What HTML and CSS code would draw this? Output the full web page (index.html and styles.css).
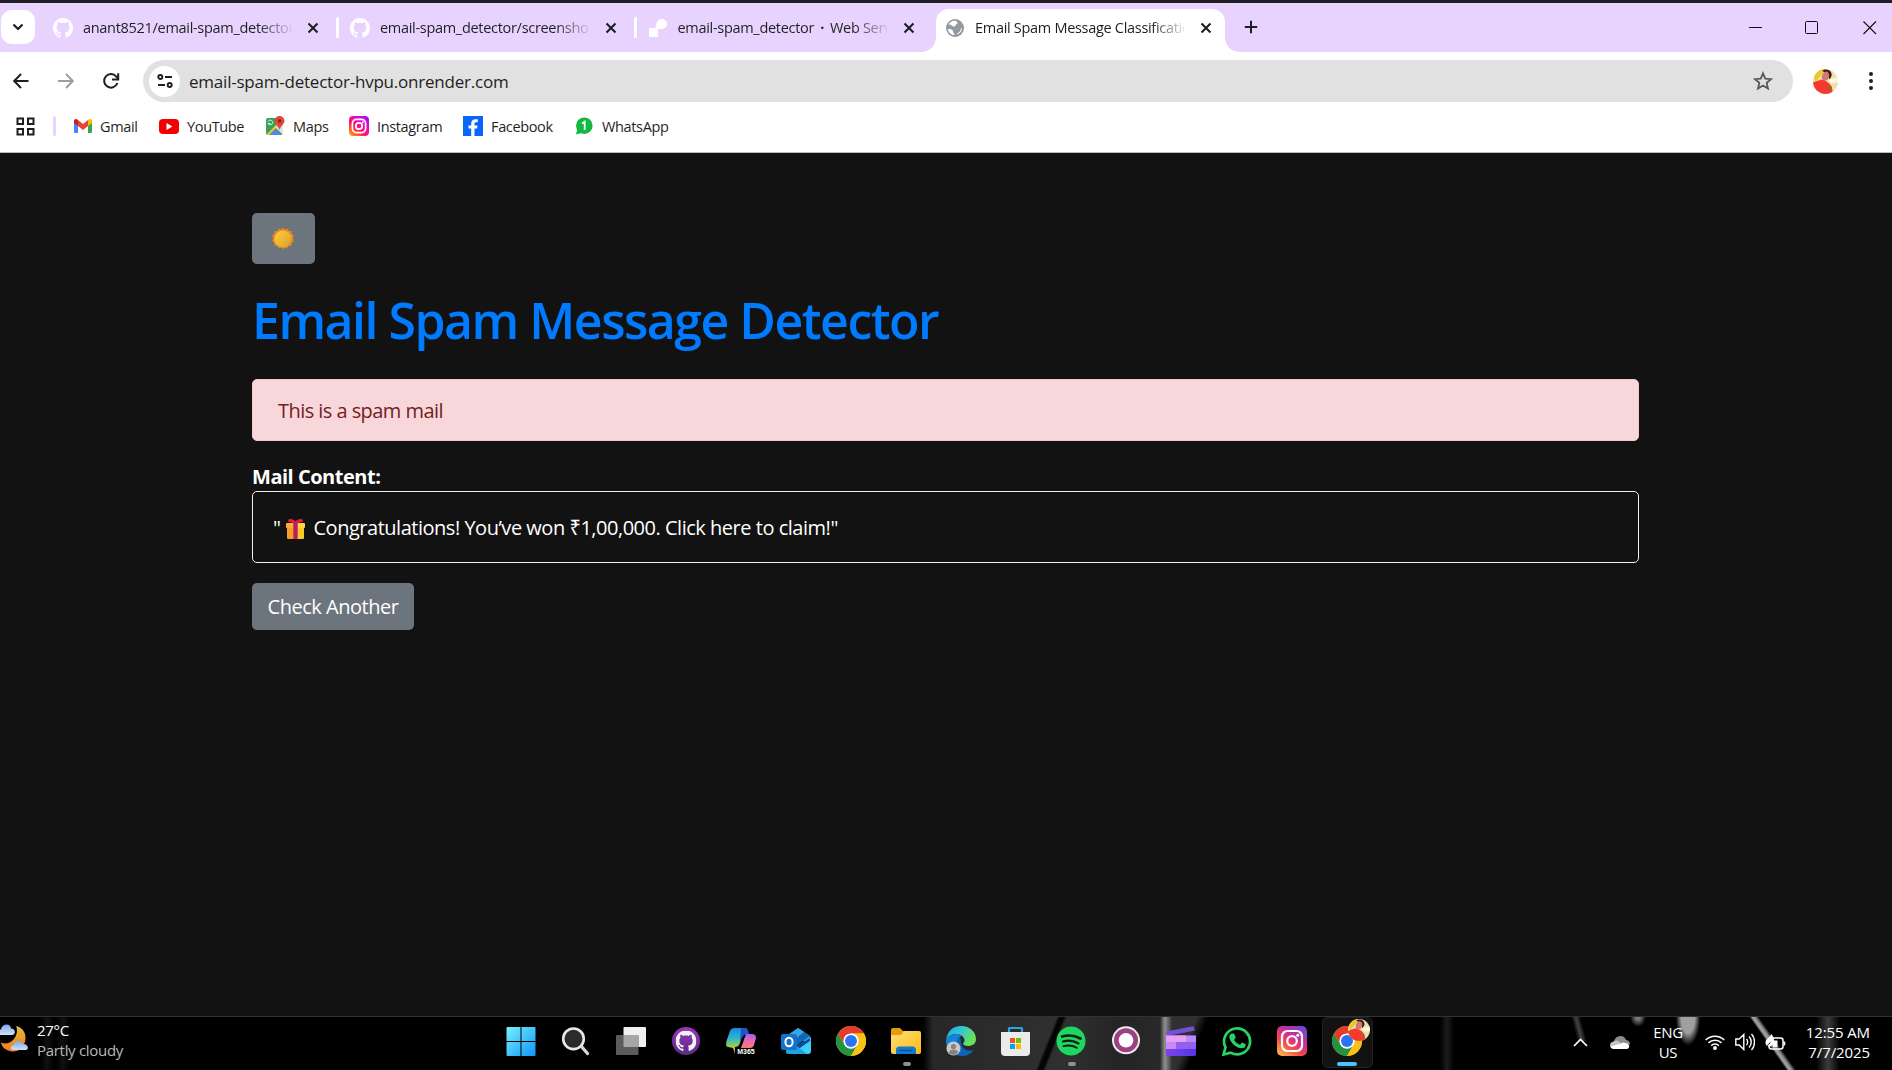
FILE: index.html
```html
<!DOCTYPE html>
<html lang="en">
<head>
<meta charset="utf-8">
<title>Email Spam Message Classification</title>
<link rel="stylesheet" href="styles.css">
</head>
<body>
<svg class="defs" width="0" height="0" aria-hidden="true">
  <defs>
    <linearGradient id="ig" x1="0.15" y1="1" x2="0.85" y2="0"><stop offset="0" stop-color="#fdb54b"/><stop offset=".35" stop-color="#f5484a"/><stop offset=".6" stop-color="#d22f8f"/><stop offset="1" stop-color="#6a45d9"/></linearGradient>
    <linearGradient id="ig2" x1="0" y1="1" x2=".9" y2="0"><stop offset="0" stop-color="#ffb400"/><stop offset=".4" stop-color="#ff1a5a"/><stop offset=".7" stop-color="#f300c8"/><stop offset="1" stop-color="#8a1cff"/></linearGradient>
    <linearGradient id="win" gradientUnits="userSpaceOnUse" x1="0" y1="0" x2="30" y2="30"><stop offset="0" stop-color="#7af3fb"/><stop offset="1" stop-color="#1093f8"/></linearGradient>
    <linearGradient id="gh" x1="0" y1="0" x2="0" y2="1"><stop offset="0" stop-color="#9a35b8"/><stop offset="1" stop-color="#5b2a86"/></linearGradient>
    <linearGradient id="edge" x1="0" y1="0" x2="1" y2=".4"><stop offset="0" stop-color="#1da5e8"/><stop offset=".5" stop-color="#34c6d2"/><stop offset="1" stop-color="#6be05a"/></linearGradient>
    <linearGradient id="cpa" x1="0" y1="0" x2="0" y2="1"><stop offset="0" stop-color="#1489e8"/><stop offset=".4" stop-color="#2fb8c8"/><stop offset=".7" stop-color="#9ccd4a"/><stop offset="1" stop-color="#ff7a2e"/></linearGradient>
    <linearGradient id="cpb" x1="0" y1="0" x2="0" y2="1"><stop offset="0" stop-color="#a25bf0"/><stop offset=".5" stop-color="#e86bb8"/><stop offset="1" stop-color="#ff7a62"/></linearGradient>
    <linearGradient id="moon" x1="0" y1="0" x2="0" y2="1"><stop offset="0" stop-color="#e0bd3c"/><stop offset="1" stop-color="#f47a16"/></linearGradient>
    <linearGradient id="cloud" x1="0" y1="0" x2="0" y2="1"><stop offset="0" stop-color="#7fa8ec"/><stop offset="1" stop-color="#cfe0fb"/></linearGradient>
    <linearGradient id="fold" x1="0" y1="0" x2="1" y2="1"><stop offset="0" stop-color="#ffe07a"/><stop offset="1" stop-color="#fdb813"/></linearGradient>
    <linearGradient id="clip" x1="0" y1="0" x2="1" y2="0"><stop offset="0" stop-color="#7b46e8"/><stop offset="1" stop-color="#5236e4"/></linearGradient>
    <linearGradient id="sun" x1="0" y1="0" x2="1" y2="1"><stop offset="0" stop-color="#ffd43b"/><stop offset="1" stop-color="#d99a2e"/></linearGradient>
    <clipPath id="disc"><circle cx="12" cy="12" r="12"/></clipPath>
    <symbol id="octocat" viewBox="0 0 16 16"><path d="M8 0C3.58 0 0 3.58 0 8c0 3.54 2.29 6.53 5.47 7.59.4.07.55-.17.55-.38 0-.19-.01-.82-.01-1.49-2.01.37-2.53-.49-2.69-.94-.09-.23-.48-.94-.82-1.13-.28-.15-.68-.52-.01-.53.63-.01 1.08.58 1.23.82.72 1.21 1.87.87 2.33.66.07-.52.28-.87.51-1.07-1.78-.2-3.64-.89-3.64-3.95 0-.87.31-1.59.82-2.15-.08-.2-.36-1.02.08-2.12 0 0 .67-.21 2.2.82.64-.18 1.32-.27 2-.27s1.36.09 2 .27c1.53-1.04 2.2-.82 2.2-.82.44 1.1.16 1.92.08 2.12.51.56.82 1.27.82 2.15 0 3.07-1.87 3.75-3.65 3.95.29.25.54.73.54 1.48 0 1.07-.01 1.93-.01 2.2 0 .21.15.46.55.38A8.01 8.01 0 0 0 16 8c0-4.42-3.58-8-8-8z"/></symbol>
    <symbol id="close" viewBox="0 0 12 12"><path d="M1.5 1.5l9 9M10.5 1.5l-9 9" stroke="#1f1f1f" stroke-width="2.1"/></symbol>
    <symbol id="chrome" viewBox="0 0 48 48"><circle cx="24" cy="24" r="24" fill="#fbc116"/><path d="M24 12h20.8A24 24 0 0 0 3.2 12l10.4 18z" fill="#e33b2e"/><path d="M3.2 12A24 24 0 0 0 24 48l10.4-18L24 24l-10.4 6z" fill="#229342"/><path d="M34.4 30L24 48A24 24 0 0 0 44.8 12H24z" fill="#fbc116"/><circle cx="24" cy="24" r="12.2" fill="#fff"/><circle cx="24" cy="24" r="9.6" fill="#2b73f0"/></symbol>
    <symbol id="avatar" viewBox="0 0 24 24"><g clip-path="url(#disc)"><path fill="#f2dfa8" d="M0 0h24v24H0z"/><path fill="#e9c832" d="M0 0h13L2 13z"/><path fill="#3a1a1c" d="M9 2c3-3 9-1 9 4l-2 4-3-6z"/><ellipse cx="12" cy="7" rx="3.400" ry="4.600" transform="rotate(20 12 7)" fill="#cf7a70"/><path fill="#f4392f" d="M0 13c4-2 6-2 8-3l5 2c4 2 6 6 6 12H0z"/><path fill="#fbf6e6" d="M15 10l9-2v5l-7 1z"/><path fill="#4d8a3a" d="M14 19l4-3-.5 4z"/></g></symbol>
  </defs>
</svg>

<header class="browser">
  <div class="tabstrip">
    <button class="tab-search"><svg width="12" height="8" viewBox="0 0 12 8"><path d="M1.500 1.500L6 6l4.500-4.500" fill="none" stroke="#1f1f1f" stroke-width="2.200"/></svg></button>
    <div class="tab t1"><svg class="fav" fill="#fff"><use href="#octocat"/></svg><span class="tab-title">anant8521/email-spam_detector</span><svg class="x"><use href="#close"/></svg><i class="sep"></i></div>
    <div class="tab"><svg class="fav" fill="#fff"><use href="#octocat"/></svg><span class="tab-title">email-spam_detector/screenshots</span><svg class="x"><use href="#close"/></svg><i class="sep"></i></div>
    <div class="tab"><svg class="fav" viewBox="0 0 20 20"><path fill="#fff" d="M1 10h5.500c1 0 1.500-.8 1.600-2C8.500 3.500 10.500 1 14 1a5 5 0 1 1 0 10h-4v8H1z"/></svg><span class="tab-title">email-spam_detector<b class="mid">·</b>Web Service</span><svg class="x"><use href="#close"/></svg></div>
    <div class="tab active"><svg class="fav" viewBox="0 0 20 20"><circle cx="10" cy="10" r="9" fill="#9298a0"/><path d="M3.500 6.500c3-.5 3.500 2 5.500 2s1-2 3-2.500c1-.3.500-2.500-1-3-3-.8-6 .8-7.500 3.500zM2.800 11c3 0 5.200.3 5.200 2.500 0 1.500 1.500 1 1.500 3.500-3.500 0-6.200-2.500-6.700-6zM12 16.500c.3-2 3-2 3.500-4.500.3-1.500 1-2 1.500-2 0 3-2 5.700-5 6.500z" fill="#fff"/></svg><span class="tab-title">Email Spam Message Classification</span><svg class="x"><use href="#close"/></svg></div>
    <svg class="plus" width="14" height="14" viewBox="0 0 14 14"><path d="M7 .8v12.400M.8 7h12.400" stroke="#1f1f1f" stroke-width="2"/></svg>
    <div class="winctl">
      <svg width="14" height="14" viewBox="0 0 14 14"><path d="M0 6.500h13" stroke="#111"/></svg>
      <svg width="14" height="14" viewBox="0 0 14 14"><rect x=".5" y=".5" width="12" height="12" rx="1" fill="none" stroke="#111"/></svg>
      <svg width="14" height="14" viewBox="0 0 14 14"><path d="M.5.5l12.500 12.500M13 .5L.5 13" stroke="#111" stroke-width="1.100"/></svg>
    </div>
  </div>

  <div class="toolbar">
    <svg class="nav" width="18" height="18" viewBox="0 0 18 18"><path d="M16.500 9h-14M9 2L2.200 9 9 16" fill="none" stroke="#1f1f1f" stroke-width="2"/></svg>
    <svg class="nav" width="18" height="18" viewBox="0 0 18 18"><path d="M1 9h14.500M9 2l6.800 7L9 16" fill="none" stroke="#9d9d9d" stroke-width="2"/></svg>
    <svg class="nav" width="18" height="18" viewBox="0 0 18 18"><path d="M15.400 11A6.800 6.800 0 1 1 14.300 4.600L16 6.600" fill="none" stroke="#1f1f1f" stroke-width="2"/><path d="M16.200 1.200v6.300H10" fill="none" stroke="#1f1f1f" stroke-width="2"/></svg>
    <div class="omnibox">
      <span class="site"><svg width="16" height="16" viewBox="0 0 16 16" fill="none" stroke="#1f1f1f" stroke-width="1.900"><circle cx="3.300" cy="4" r="2"/><path d="M8 4h7M1 12h7"/><circle cx="12.700" cy="12" r="2"/></svg></span>
      <span class="url">email-spam-detector-hvpu.onrender.com</span>
      <svg class="star" width="20" height="20" viewBox="0 0 24 24"><path d="M12 2.800l2.700 6.400 6.900.6-5.200 4.500 1.600 6.800-6-3.600-6 3.600 1.600-6.800L2.400 9.800l6.900-.6z" fill="none" stroke="#5a5a5a" stroke-width="2.200"/></svg>
    </div>
    <svg class="profile"><use href="#avatar"/></svg>
    <svg class="dots" width="6" height="20" viewBox="0 0 6 20" fill="#1f1f1f"><circle cx="3" cy="3" r="2"/><circle cx="3" cy="10" r="2"/><circle cx="3" cy="17" r="2"/></svg>
  </div>

  <nav class="bookmarks">
    <svg class="apps" width="19" height="19" viewBox="0 0 19 19" fill="none" stroke="#1f1f1f" stroke-width="2"><path d="M1.500 1.500h5.500v5.500h-5.500zM12 1.500h5.500v5.500H12zM1.500 12h5.500v5.500h-5.500zM12 12h5.500v5.500H12z"/></svg>
    <i class="bsep"></i>
    <a class="bm b1"><svg width="18" height="14" viewBox="0 0 18 14"><path fill="#4285f4" d="M0 2v10.700C0 13.500.6 14 1.300 14H4V5z"/><path fill="#34a853" d="M18 2v10.700c0 .8-.6 1.300-1.300 1.300H14V5z"/><path fill="#ea4335" d="M4 1l5 4 5-4v6l-5 4-5-4z"/><path fill="#c5221f" d="M0 2C0 0 2.200-.7 4 1v6L0 4z"/><path fill="#fbbc04" d="M18 2c0-2-2.200-2.700-4-1v6l4-3z"/></svg><span>Gmail</span></a>
    <a class="bm b2"><svg width="20" height="15" viewBox="0 0 20 15"><rect width="20" height="15" rx="4" fill="#f00000"/><path d="M7.500 4v7l6-3.500z" fill="#fff"/></svg><span>YouTube</span></a>
    <a class="bm b3"><svg width="19" height="20" viewBox="0 0 19 20"><rect y="2" width="17" height="17" rx="2" fill="#34a35a"/><path d="M3 19l6-6 6 6z" fill="#4a8af4"/><path d="M0 19L16 3l1.200 2L3 19z" fill="#fbc42d"/><path d="M9 11l8 8V9z" fill="#dfe3ea"/><path d="M2 5.500a2.400 2.400 0 1 1 0 2h2.500" fill="none" stroke="#e6f4e9"/><path d="M13.500 0a5 5 0 0 1 5 5c0 3-3.500 4-5 9-1.500-5-5-6-5-9a5 5 0 0 1 5-5z" fill="#e2453b"/><circle cx="13.500" cy="5" r="1.700" fill="#7c231d"/></svg><span>Maps</span></a>
    <a class="bm b4"><svg width="20" height="20" viewBox="0 0 20 20"><rect width="20" height="20" rx="4" fill="url(#ig2)"/><g fill="none" stroke="#fff" stroke-width="1.700"><rect x="3.400" y="3.400" width="13.200" height="13.200" rx="4"/><circle cx="10" cy="10" r="3.200"/></g><circle cx="13.800" cy="6.200" r="1" fill="#fff"/></svg><span>Instagram</span></a>
    <a class="bm b5"><svg width="20" height="20" viewBox="0 0 20 20"><path fill="#0866ff" d="M0 0h20v20H0z"/><path fill="#fff" d="M8.200 20v-7.500H5.500v-3h2.700V7.800c0-3 1.500-4.600 4.300-4.600h2.200v3h-1.500c-1.300 0-1.700.6-1.700 1.700v1.600h3l-.5 3h-2.500V20z"/></svg><span>Facebook</span></a>
    <a class="bm b6"><svg width="18" height="18" viewBox="0 0 18 18"><circle cx="9.300" cy="8.700" r="8.300" fill="#12b83f"/><path d="M1 17.500l1.500-6 4 4.500z" fill="#12b83f"/><path d="M7 6.500l2.700-1.800V13" fill="none" stroke="#fff" stroke-width="1.800"/></svg><span>WhatsApp</span></a>
  </nav>
</header>

<main class="page">
  <button class="btn theme"><svg width="24" height="24" viewBox="0 0 24 24"><path d="M12 .7l2 1.900 2.500-1.100 1.300 2.400 2.800.2.100 2.900 2.200 1.700-1.100 2.700 1.100 2.700-2.300 1.700-.2 2.800-2.800.3-1.400 2.400-2.500-1.100-1.700 2-1.800-2-2.500 1.100L6.300 19l-2.700-.4-.3-2.800-2.200-1.700 1.100-2.700-1.100-2.700 2.300-1.600.2-2.900 2.700-.3 1.400-2.400 2.500 1.100z" fill="#f08424"/><circle cx="12" cy="12" r="8.600" fill="url(#sun)"/></svg></button>
  <h1>Email Spam Message Detector</h1>
  <div class="alert"><span>This is a spam mail</span></div>
  <strong class="label">Mail Content:</strong>
  <div class="mail"><span>"</span><svg width="19" height="21" viewBox="0 0 19 21"><path d="M9.500 3.500C8 .5 2 0 2 2.500 2 4 4 5 9.500 5S17 4 17 2.500C17 0 11 .5 9.500 3.500z" fill="#d9203e"/><path d="M1 9h8.500v12H2.500Q1 21 1 20z" fill="#f3a126"/><path d="M9.500 9H18v11q0 1-1.500 1h-7z" fill="#fcc92a"/><rect x="0" y="5" width="9.500" height="5" rx="1" fill="#f8ad36"/><rect x="9.500" y="5" width="9.500" height="5" rx="1" fill="#ffd53b"/><path d="M7.300 4.500h4.400V21H7.300z" fill="#bd1d5e"/></svg><span class="msg">Congratulations! You’ve won ₹1,00,000. Click here to claim!"</span></div>
  <a class="btn again"><span>Check Another</span></a>
</main>

<footer class="taskbar">
  <div class="weather">
    <svg width="28" height="28" viewBox="0 0 28 28"><path d="M16 2c5 1 9.500 5 9.500 12S20 27.500 13 27.500C7 27.500 2 24 1 18.500c4 2 9 1 12.500-3S18 6 16 2z" fill="url(#moon)"/><path d="M-3 11c-2-5 3-6 4-5.500C2-1 11-1 11 4.500c5 0 5 6.500 1 6.500z" fill="url(#cloud)"/><path d="M13 26c-3.500 0-3-5 1-5 0-5 8-5 8.500-1 6-.5 7 6 3 6z" fill="url(#cloud)"/></svg>
    <div class="wtext"><span>27°C</span><span class="dim">Partly cloudy</span></div>
  </div>
  <div class="dock">
    <span class="app"><svg viewBox="0 0 30 30"><g fill="url(#win)"><path d="M.5 2a1 1 0 0 1 1-1H14.500v14H.5zM15.500 1H28.500a1 1 0 0 1 1 1v13h-14zM.5 16h14v14H1.500a1 1 0 0 1-1-1zM15.500 16h14v13a1 1 0 0 1-1 1h-13z"/></g></svg></span>
    <span class="app"><svg viewBox="0 0 30 30"><path d="M20 20l6.500 7.500" stroke="#d3d6da" stroke-width="3.400" stroke-linecap="round"/><circle cx="12.500" cy="12.800" r="10.300" fill="#2b2b2d" stroke="#e7e8ea" stroke-width="2.600"/></svg></span>
    <span class="app"><svg viewBox="0 0 30 30"><rect x="7.500" y="1" width="22.500" height="20" rx="1" fill="#f0f0f0"/><rect x="0" y="9" width="22.500" height="20" rx="1" fill="#5b5b5b"/><path d="M7.500 9h15v12h-15z" fill="#a6a6a6"/></svg></span>
    <span class="app"><svg viewBox="0 0 30 30"><circle cx="15" cy="15" r="14" fill="url(#gh)"/><svg x="4.500" y="4.500" width="21" height="21" fill="#f2f2f6"><use href="#octocat"/></svg></svg></span>
    <span class="app"><svg viewBox="0 0 30 30"><path d="M9 2h12L18 4l-4 13c-1 3-3 4-5 4v7l-2-6-5-1C0 21 0 18 .5 15L4 5q1-3 5-3z" fill="url(#cpa)"/><path d="M15 2h4c2 0 3 1 4 6l-5 1-4 6z" fill="#2153c9"/><path d="M20 8h6q4 0 4 4l-2 7q-1 3-4 3h-9z" fill="url(#cpb)"/><text x="11.200" y="28.300" class="m365">M365</text></svg></span>
    <span class="app"><svg viewBox="0 0 30 30"><path d="M5 10L17 2l12 8v5H5z" fill="#2ba0e0"/><path d="M17 2l12 8-14 10-6-8z" fill="#1267b8"/><path d="M9 9l8-7 6 4-11 9z" fill="#35a9e6"/><path d="M30 11v14q0 3-3 3H8q-3 0-3-3l11-5z" fill="#3fd0f5"/><path d="M16 20l13-8v3l-13 9z" fill="#0d4a9a"/><path d="M5 23l11-3 10 8H8q-3 0-3-3z" fill="#1ca0e6"/><rect x="0" y="8" width="16" height="16" rx="2" fill="#1473c8"/><ellipse cx="8" cy="16" rx="3.600" ry="4.300" fill="none" stroke="#fff" stroke-width="2"/></svg></span>
    <span class="app"><svg><use href="#chrome"/></svg></span>
    <span class="app"><svg viewBox="0 0 30 30"><path d="M0 4q0-2 2-2h7l3 3h16v8H0z" fill="#e39d0b"/><path d="M0 9h10l3-4h15q2 0 2 2v19q0 2-2 2H2q-2 0-2-2z" fill="url(#fold)"/><path d="M5 28v-4q0-3.500 3.500-3.500h13q3.500 0 3.500 3.500v4z" fill="#1379cc"/><path d="M8.500 24.500h13" stroke="#0a4e94" stroke-width="1.200"/></svg><i class="run"></i></span>
    <span class="app"><svg viewBox="0 0 30 30"><path d="M2 12C2 24 8 30 16 30c5 0 9-2 11.500-6-6 2-12-1-12.500-8 0-4-2-6-6-7z" fill="#0f62b4"/><path d="M0 15C1 5 7 0 15 0c9 0 15 6 15 13 0 5-4 7-8 7-3 0-5-1-5-2.500 0-1 1.500-1 1.500-3C18.500 11 15 8 10.500 8 5 8 1 11 0 15z" fill="url(#edge)"/><path d="M0 15c1-4 5-7 10.500-7 2 0 4 .6 5.500 1.700-3 .8-5 3.300-5 6.300 0 4 2 7 5 9L9 28C3 26 0 20 0 15z" fill="#1282d4"/><circle cx="7.500" cy="22.500" r="7" fill="#cbc9c8"/><circle cx="7.500" cy="20.500" r="2.600" fill="#858280"/><path d="M3 27q0-3.500 4.500-3.500T12 27q-4.500 4-9 0z" fill="#858280"/></svg></span>
    <span class="app"><svg viewBox="0 0 30 30"><path d="M8 8V2.500Q8 2 8.500 2h12q.5 0 .5.500V8" fill="none" stroke="#28a8e0" stroke-width="2.200"/><path d="M0 6h29v20q0 4-4 4H4q-4 0-4-4z" fill="#ebebeb"/><path fill="#f25022" d="M9 12h5v5H9z"/><path fill="#7fba00" d="M15 12h5v5h-5z"/><path fill="#00a4ef" d="M9 18h5v5H9z"/><path fill="#ffb900" d="M15 18h5v5h-5z"/></svg></span>
    <span class="app"><svg viewBox="0 0 30 30"><circle cx="15" cy="15" r="14.500" fill="#1ed760"/><g fill="none" stroke="#0c1f12" stroke-linecap="round"><path d="M6 10.500c6-1.700 13-1 18.500 2" stroke-width="2.700"/><path d="M7 15.500c5-1.500 11-.8 15.500 1.900" stroke-width="2.300"/><path d="M7.500 20.200c4.500-1.200 9.500-.6 13.300 1.600" stroke-width="1.900"/></g></svg><i class="run"></i></span>
    <span class="app"><svg viewBox="0 0 30 30"><circle cx="15" cy="14.300" r="14" fill="#ececec"/><circle cx="15" cy="14.300" r="12" fill="#9c4084"/><circle cx="15" cy="14.300" r="7.300" fill="#fff"/></svg></span>
    <span class="app"><svg viewBox="0 0 30 30"><path d="M0 5.500L26 .4q2-.4 2.400 1.500l.4 2.600L1 10z" fill="#7450d8"/><rect y="9.500" width="30" height="20.500" rx="1.500" fill="url(#clip)"/><path d="M0 9.500h30V16H0z" fill="#b98af5"/><path d="M0 9.500h20V16H0z" fill="#e5a0f6"/><path d="M0 16h30v7H0z" fill="#925ff0"/><path d="M0 16h10v7H0z" fill="#c98af5"/></svg></span>
    <span class="app"><svg viewBox="0 0 30 30"><path d="M1.500 28.500l2-7.200A13 13 0 1 1 8.500 26.600z" fill="none" stroke="#25d366" stroke-width="2.700"/><path d="M10 7.500h1.500q.6 0 .9.700l1.200 2.800q.2.600-.2 1.100l-1 1.300q-.3.400 0 .8c1.200 2 2.800 3.500 5 4.400q.5.200.9-.2l1.200-1.500q.4-.5 1-.2l2.700 1.300q.7.300.6 1c-.2 2-1.800 3.300-3.800 3.300C14 22.500 7.800 16 7.300 11.200c-.1-1.700 1.200-3.700 2.700-3.700z" fill="#25d366"/></svg></span>
    <span class="app"><svg viewBox="0 0 30 30"><rect width="30" height="30" rx="5" fill="url(#ig)"/><g fill="none" stroke="#fff" stroke-width="2.200"><rect x="5" y="5" width="20" height="20" rx="5.500"/><circle cx="15" cy="15" r="4.800"/></g><circle cx="20.800" cy="9.200" r="1.500" fill="#fff"/></svg></span>
    <span class="app current"><svg><use href="#chrome"/></svg><svg class="badge"><use href="#avatar"/></svg><i class="run wide"></i></span>
  </div>
  <div class="tray">
    <svg width="15" height="9" viewBox="0 0 15 9"><path d="M1 8l6.500-6.500L14 8" fill="none" stroke="#fff" stroke-width="1.700"/></svg>
    <svg class="onedrive" width="20" height="13" viewBox="0 0 20 13"><path d="M4 9C3 4 6 0 10.500 0c3 0 5 2 5.500 4 3 .3 4 2.500 4 4.500z" fill="#8d8d8d"/><path d="M4 13C-1 13-1.500 6 3.500 5.500 7 3 10 5.500 11 8l-3 5z" fill="#c4c4c4"/><path d="M4 13c-1.500 0-3-1-3.500-2.500L11 7.500q2-1.500 4-.5c4-.5 6.500 5.500 1.500 6z" fill="#fff"/></svg>
    <div class="lang"><span>ENG</span><span>US</span></div>
    <svg class="wifi" width="20" height="16" viewBox="0 0 20 16" fill="none" stroke="#fff" stroke-width="1.500"><path d="M.7 6a13.200 13.200 0 0 1 18.600 0M3.500 8.900a9.200 9.200 0 0 1 13 0M6.200 11.600a5.400 5.400 0 0 1 7.600 0"/><circle cx="10" cy="14" r="1.200" fill="#fff"/></svg>
    <svg class="vol" width="20" height="18" viewBox="0 0 20 18" fill="none" stroke="#fff" stroke-width="1.400"><path d="M.8 6h3.400l4.600-4.500v15L4.200 12H.8zM11.500 6c1.500 1.500 1.500 4.500 0 6M14 3.500c3 3 3 8 0 11M16.500 1c4 4 4 12 0 16"/></svg>
    <svg class="bat" width="21" height="17" viewBox="0 0 21 17"><rect x="4" y="4" width="14" height="11" rx="2.500" fill="none" stroke="#fff" stroke-width="1.500"/><path d="M18.500 7.500h1q.8 0 .8 1v2q0 1-.8 1h-1z" fill="#fff"/><path d="M8 6.500h4.500V13H8z" fill="#fff"/><path d="M6.500 0C8 2.500 9 4 9 7c0 3-2 5.500-4.500 5.500C2 12.500.5 11 .5 8.500.5 5 4 4.500 6.500 0z" fill="#fff"/><path d="M0 15.500c1-3 3-5 5.500-7" stroke="#111" fill="none"/></svg>
    <div class="clock"><span>12:55 AM</span><span>7/7/2025</span></div>
  </div>
</footer>
</body>
</html>
```
FILE: styles.css
```css
* { box-sizing: border-box; }
body {
  margin: 0;
  width: 1892px;
  height: 1070px;
  overflow: hidden;
  display: flex;
  flex-direction: column;
  background: #121212;
  font-family: "Open Sans", "Noto Sans", sans-serif;
  color: #fff;
}
svg { display: block; flex: none; }
span { white-space: nowrap; }
button { font: inherit; border: 0; padding: 0; }
.defs { position: absolute; }

/* Browser chrome */
.browser { background: #fff; border-top: 3px solid #211f23; border-bottom: 1px solid #bdbdbd; height: 153px; color: #1f1f1f; flex: none; }
.tabstrip { height: 49px; background: #e8d3ff; display: flex; align-items: flex-start; }
.tab-search { width: 34px; height: 34px; margin: 7px 0 0 1px; border-radius: 11px; background: #fff; display: flex; align-items: center; justify-content: center; }
.tab { width: 297.500px; height: 49px; display: flex; align-items: center; padding-left: 11px; flex: none; }
.tab.t1 { width: 297px; margin-left: 7px; }
.fav { width: 20px; height: 20px; margin-right: 10px; }
.tab-title { width: 209px; font-size: 14.500px; letter-spacing: -.3px; overflow: hidden; mask-image: linear-gradient(90deg, #000 84%, rgba(0,0,0,.1)); }
.mid { margin: 0 6px; }
.x { width: 12px; height: 12px; margin-left: 16px; }
.sep { width: 3px; height: 21px; border-radius: 2px; background: #fff; margin-left: 17px; }
.tab.active { position: relative; width: 289px; height: 43px; margin: 6px 0 0 2px; padding: 0 0 6px 9px; background: #fff; border-radius: 13px 13px 0 0; }
.tab.active::before, .tab.active::after { content: ""; position: absolute; bottom: 0; width: 14px; height: 14px; }
.tab.active::before { left: -14px; background: radial-gradient(circle at 0 0, transparent 13.500px, #fff 14px); }
.tab.active::after { right: -14px; background: radial-gradient(circle at 100% 0, transparent 13.500px, #fff 14px); }
.plus { margin: 17px 0 0 19px; }
.winctl { margin: 18px 15px 0 auto; display: flex; gap: 43px; }
.winctl svg:nth-child(2) { margin-left: -1px; margin-right: 1px; }
.toolbar { height: 58px; display: flex; align-items: center; padding-left: 12px; gap: 27px; }
.omnibox { width: 1650px; height: 42px; margin-left: -4px; border-radius: 21px; background: #e1e1e1; display: flex; align-items: center; padding: 0 20px 0 6px; }
.site { width: 31px; height: 31px; border-radius: 50%; background: #fff; display: grid; place-items: center; }
.url { font-size: 17px; letter-spacing: -.22px; margin-left: 9px; }
.star { margin-left: auto; }
.profile { width: 25px; height: 25px; margin-left: -7px; }
.dots { margin-left: 3px; }
.bookmarks { height: 32px; display: flex; align-items: center; font-size: 14.500px; letter-spacing: -.35px; padding-left: 16px; }
.bsep { width: 3px; height: 20px; border-radius: 2px; background: #e8d3ff; margin: 0 18px 0 18px; }
.bm { display: flex; align-items: center; gap: 8px; flex: none; }
.b1 { width: 85px; }
.b2 { width: 107px; }
.b3 { width: 83px; }
.b4 { width: 114px; }
.b5 { width: 112px; }
.b6 { gap: 9px; }

/* Page */
.page { flex: 1; padding: 60px 0 0 252px; display: flex; flex-direction: column; align-items: flex-start; font-size: 20px; line-height: 30px; letter-spacing: -.48px; }
.btn { background: #6c757d; border-radius: 5px; display: flex; align-items: center; justify-content: center; color: #fff; }
.theme { width: 63px; height: 51px; padding-right: 1px; }
h1 { margin: 26px 0 0; font-size: 50px; line-height: 60px; height: 60px; font-weight: 550; letter-spacing: -1.500px; color: #007bff; white-space: nowrap; }
.alert { width: 1387px; height: 62px; margin-top: 29px; padding: 2px 25px 0; border: 1px solid #f5c6cb; border-radius: 5px; background: #f8d7da; color: #721c24; display: flex; align-items: center; letter-spacing: -.55px; }
.label { margin-top: 21px; height: 29px; white-space: nowrap; }
.mail { width: 1387px; height: 72px; border: 1px solid #f1f1f1; border-radius: 5px; padding: 2px 20px 0; display: flex; align-items: center; }
.mail svg { margin: 0 9px 0 5px; }
.again { width: 162px; height: 47px; margin-top: 20px; padding-top: 1px; }

/* Taskbar */
.taskbar {
  height: 54px;
  flex: none;
  border-top: 1px solid #343133;
  display: flex;
  background:
    linear-gradient(55deg, transparent 46%, #a5a5a5 49%, #8c8c8c 52%, transparent 56%) 1742px 0 / 60px 54px no-repeat,
    radial-gradient(ellipse at 50% 0, #a0a0a0 40%, transparent 72%) 1676px 0 / 24px 28px no-repeat,
    linear-gradient(90deg, transparent, #3c3c3c, transparent) 1816px 0 / 24px 54px no-repeat,
    linear-gradient(75deg, transparent 35%, #444 50%, transparent 65%) 1566px 0 / 26px 24px no-repeat,
    radial-gradient(ellipse at 50% 0, #777 20%, transparent 70%) 1630px 0 / 16px 10px no-repeat,
    linear-gradient(90deg, transparent, #1c1c1c, transparent) 1440px 0 / 14px 54px no-repeat,
    linear-gradient(90deg, transparent, #111, transparent) 40px 0 / 14px 54px no-repeat,
    linear-gradient(90deg, transparent, #111, transparent) 56px 0 / 14px 54px no-repeat,
    linear-gradient(90deg, transparent, #8f8f8f 40%, #777 60%, transparent) 1160px 0 / 12px 54px no-repeat,
    linear-gradient(112deg, transparent 46%, #050505 49%, #050505 53%, transparent 56%) 1010px 0 / 80px 54px no-repeat,
    linear-gradient(112deg, #303030 40%, transparent 56%) 1168px 0 / 50px 54px no-repeat,
    linear-gradient(90deg, transparent, #272727 10px, #303030 140px, #242424 200px, #2a2a2a) 923px 0 / 243px 54px no-repeat,
    #000;
  font-size: 15px;
  letter-spacing: -.3px;
}
.weather { width: 493px; display: flex; padding-top: 3px; }
.weather > svg { margin: 4px 9px 0 0; }
.wtext { display: flex; flex-direction: column; line-height: 20px; }
.dim { color: #b9b9b9; }
.dock { display: flex; width: 881px; }
.app { position: relative; width: 55.080px; height: 53px; flex: none; display: flex; justify-content: center; padding-top: 9px; }
.app > svg { width: 30px; height: 30px; }
.m365 { font: 700 7px "Liberation Sans", sans-serif; letter-spacing: 0; fill: #fff; }
.run { position: absolute; left: 24px; bottom: 4px; width: 8px; height: 4px; border-radius: 2px; background: #8f8f8f; }
.run.wide { left: 18px; width: 20px; background: #4cc2ff; }
.current::before { content: ""; position: absolute; left: 3px; top: 0; width: 49px; height: 49px; border: 1px solid #222; border-radius: 5px; background: #121212; }
.current > svg { position: relative; }
.current > .badge { position: absolute; left: 29px; top: 2px; width: 22px; height: 22px; }
.tray { margin-left: 199px; display: flex; height: 50px; align-items: center; }
.onedrive { margin-left: 22px; }
.lang { width: 40px; margin-left: 18px; display: flex; flex-direction: column; align-items: center; line-height: 20px; }
.wifi { margin-left: 17px; }
.vol { margin-left: 10px; }
.bat { margin-left: 10px; }
.clock { width: 84px; display: flex; flex-direction: column; align-items: flex-end; line-height: 20px; letter-spacing: -.1px; }
```
